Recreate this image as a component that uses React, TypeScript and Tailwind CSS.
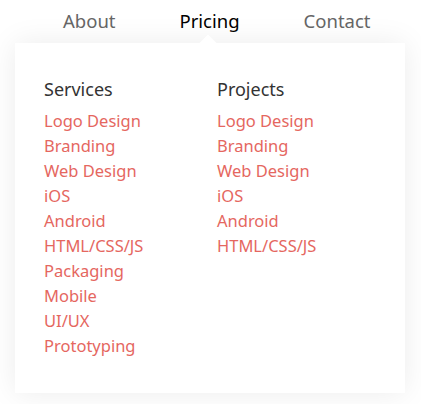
import React from "react";

const services = ["Logo Design","Branding","Web Design","iOS","Android","HTML/CSS/JS","Packaging","Mobile","UI/UX","Prototyping"];
const projects = ["Logo Design","Branding","Web Design","iOS","Android","HTML/CSS/JS"];

function Col({ title, items }: { title: string; items: string[] }) {
  return (
    <div className="w-[173px] flex flex-col">
      <div className="text-[18px] leading-[26px] text-[#333]">{title}</div>
      <ul className="mt-[6px] flex flex-col">
        {items.map((t, i) => (
          <li key={i} className="text-[16.5px] leading-[25px] text-[#e5675f]">{t}</li>
        ))}
      </ul>
    </div>
  );
}

export default function App() {
  return (
    <div className="w-[421px] h-[404px] bg-white relative overflow-hidden" style={{ fontFamily: '"Noto Sans", "Open Sans", sans-serif' }}>
      <nav className="flex h-[43px] items-start pt-[7px] text-[18.5px] leading-[28px]">
        <div className="w-[63px]" />
        <a className="text-[#666]">About</a>
        <div className="w-[64px]" />
        <a className="text-black">Pricing</a>
        <div className="w-[64px]" />
        <a className="text-[#666]">Contact</a>
      </nav>
      <div className="relative ml-[15px] w-[390px] h-[350px] bg-white shadow-[0_0_28px_rgba(0,0,0,0.08)]">
        <div className="absolute left-[187px] top-[-6px] w-[12px] h-[12px] bg-white rotate-45" />
        <div className="relative flex pl-[29px] pt-[33px]">
          <Col title="Services" items={services} />
          <Col title="Projects" items={projects} />
        </div>
      </div>
    </div>
  );
}
